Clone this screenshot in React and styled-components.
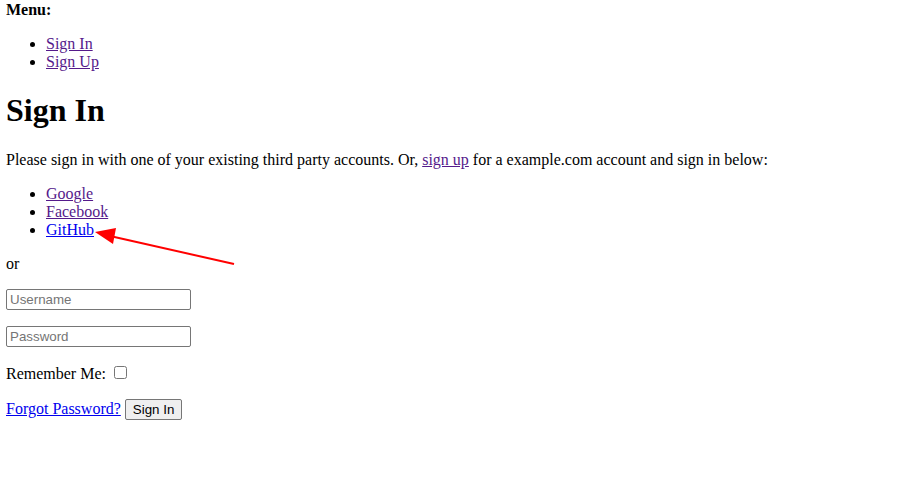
import React from 'react'
import styled, { createGlobalStyle } from 'styled-components'

const GlobalStyle = createGlobalStyle`
    body {
        margin: 1px 6px;
        font-family: "Liberation Serif", "Times New Roman", serif;
        font-size: 16px;
        color: #000;
        background: #fff;
    }
`

const Page = styled.div`
    position: relative;
`

const MenuTitle = styled.div`
    font-weight: bold;
`

const List = styled.ul`
    margin: 16px 0;
    padding-left: 40px;
`

const Item = styled.li`
    list-style-type: disc;
`

const Anchor = styled.a`
    color: ${props => (props.$visited ? '#551a8b' : '#0000ee')};
    text-decoration: underline;
    cursor: pointer;
`

const Title = styled.h1`
    font-size: 32px;
    font-weight: bold;
    margin: 21.44px 0;
`

const Para = styled.p`
    margin: 16px 0;
`

const Field = styled.input`
    box-sizing: border-box;
    font-family: "Liberation Sans", Arial, sans-serif;
    font-size: 13.33px;
    width: 185px;
    height: 21px;
    padding: 1px 3px;
    border: 1px solid #767676;
    border-radius: 2px;
    vertical-align: middle;
    &::placeholder {
        color: #757575;
    }
`

const Check = styled.input`
    margin: 3px 3px 3px 4px;
    width: 13px;
    height: 13px;
`

const Button = styled.button`
    box-sizing: border-box;
    font-family: "Liberation Sans", Arial, sans-serif;
    font-size: 13.33px;
    height: 21px;
    padding: 1px 7px;
    border: 1px solid #767676;
    border-radius: 2px;
    background: #efefef;
    color: #000;
`

const Pointer = styled.svg`
    position: absolute;
    left: -6px;
    top: -1px;
    pointer-events: none;
`

const App = () => {
    return (<>
    <GlobalStyle />
    <Page>
        <MenuTitle>Menu:</MenuTitle>
        <List>
            <Item><Anchor $visited>Sign In</Anchor></Item>
            <Item><Anchor $visited>Sign Up</Anchor></Item>
        </List>
        <Title>Sign In</Title>
        <Para>Please sign in with one of your existing third party accounts. Or, <Anchor $visited>sign up</Anchor> for a example.com account and sign in below:</Para>
        <List>
            <Item><Anchor $visited>Google</Anchor></Item>
            <Item><Anchor $visited>Facebook</Anchor></Item>
            <Item><Anchor>GitHub</Anchor></Item>
        </List>
        <Para>or</Para>
        <Para><Field type="text" placeholder="Username" /></Para>
        <Para><Field type="password" placeholder="Password" /></Para>
        <Para>Remember Me: <Check type="checkbox" /></Para>
        <Para><Anchor>Forgot Password?</Anchor> <Button>Sign In</Button></Para>
        {/* red annotation arrow pointing at GitHub */}
        <Pointer width="300" height="300" viewBox="0 0 300 300">
            <line x1="234" y1="264" x2="110" y2="236" stroke="#ff0000" strokeWidth="2" />
            <polygon points="95,232 116,228 113,244" fill="#ff0000" />
        </Pointer>
    </Page>
    </>)
}
export default App
